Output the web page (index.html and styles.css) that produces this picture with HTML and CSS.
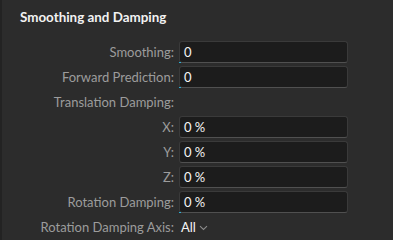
FILE: index.html
```html
<!DOCTYPE html>
<html>
<head>
<meta charset="utf-8">
<link rel="stylesheet" href="styles.css">
</head>
<body>
<div class="panel">
  <div class="title">Smoothing and Damping</div>
  <div class="grid">
    <div class="label">Smoothing:</div>
    <div class="field mark">0</div>
    <div class="label">Forward Prediction:</div>
    <div class="field mark">0</div>
    <div class="label">Translation Damping:</div>
    <div class="empty"></div>
    <div class="label">X:</div>
    <div class="field">0 %</div>
    <div class="label">Y:</div>
    <div class="field">0 %</div>
    <div class="label">Z:</div>
    <div class="field">0 %</div>
    <div class="label">Rotation Damping:</div>
    <div class="field mark">0 %</div>
    <div class="label">Rotation Damping Axis:</div>
    <div class="select">All <svg class="chev" width="9" height="6" viewBox="0 0 9 6"><path d="M1 1.2 L4.5 4.5 L8 1.2" fill="none" stroke="#8a8a8a" stroke-width="1.1"/></svg></div>
  </div>
</div>
</body>
</html>
```
FILE: styles.css
```css
html, body {
  margin: 0;
  padding: 0;
  background: #2c2c2c;
}
body {
  width: 393px;
  height: 240px;
  overflow: hidden;
  font-family: Lato, "Open Sans", sans-serif;
}
.panel {
  border-left: 2px solid #232323;
  height: 240px;
  box-sizing: border-box;
}
.title {
  color: #f2f2f2;
  font-size: 13.4px;
  font-weight: 700;
  padding: 9px 0 0 18px;
  height: 32px;
  box-sizing: border-box;
  line-height: 17px;
}
.grid {
  display: grid;
  grid-template-columns: 172px 169px;
  column-gap: 5px;
  grid-auto-rows: 22px;
  row-gap: 3px;
  margin-top: 9px;
}
.label {
  color: #9c9c9c;
  font-size: 13px;
  text-align: right;
  line-height: 22px;
}
.field {
  position: relative;
  background: #1c1c1c;
  border: 1px solid #3a3a3a;
  border-bottom-color: #505050;
  border-radius: 3px;
  box-sizing: border-box;
  color: #f4f4f4;
  font-size: 13px;
  line-height: 20px;
  padding-left: 4px;
}
.mark::after {
  content: "";
  position: absolute;
  left: -1px;
  bottom: -1px;
  width: 2px;
  height: 1px;
  background: #2ab0d8;
}
.select {
  color: #f4f4f4;
  font-size: 13px;
  line-height: 22px;
  padding-left: 2px;
  display: flex;
  align-items: center;
  gap: 3px;
}
.chev {
  margin-top: 2px;
}
```
